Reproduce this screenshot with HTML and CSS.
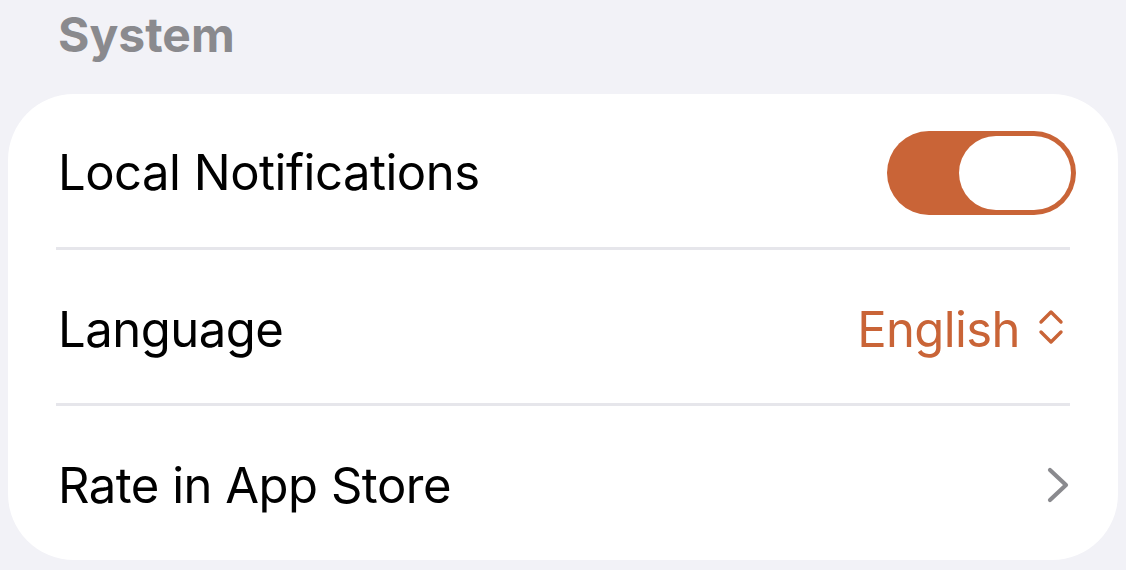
FILE: index.html
```html
<!DOCTYPE html>
<html>
<head>
<meta charset="utf-8">
<link rel="stylesheet" href="styles.css">
</head>
<body>
<div class="page">
  <div class="section-title">System</div>
  <div class="card">
    <div class="row row-toggle">
      <span class="label">Local Notifications</span>
      <span class="toggle"><span class="knob"></span></span>
    </div>
    <div class="sep"></div>
    <div class="row row-picker">
      <span class="label">Language</span>
      <span class="value">English
        <svg class="updown" viewBox="0 0 26 38" width="26" height="38"><path d="M3 14 L13 4 L23 14 M3 24 L13 34 L23 24" fill="none" stroke="currentColor" stroke-width="3.4" stroke-linecap="round" stroke-linejoin="round"/></svg>
      </span>
    </div>
    <div class="sep"></div>
    <div class="row">
      <span class="label">Rate in App Store</span>
      <svg class="chev" viewBox="0 0 24 38" width="24" height="38"><path d="M4 4 L20 19 L4 34" fill="none" stroke="currentColor" stroke-width="4.2" stroke-linecap="round" stroke-linejoin="round"/></svg>
    </div>
  </div>
</div>
</body>
</html>
```
FILE: styles.css
```css
html, body {
  margin: 0;
  padding: 0;
  background: #f2f2f7;
  font-family: Inter, "Noto Sans", sans-serif;
}
.page {
  width: 1126px;
  height: 570px;
  overflow: hidden;
  padding: 0 8px;
  box-sizing: border-box;
}
.section-title {
  height: 94px;
  box-sizing: border-box;
  padding: 9px 0 0 50px;
  font-size: 48px;
  font-weight: 700;
  color: #8a8a8e;
  line-height: 52px;
}
.card {
  background: #ffffff;
  border-radius: 66px;
  width: 1110px;
  height: 466px;
  display: flex;
  flex-direction: column;
}
.row {
  height: 154px;
  display: flex;
  align-items: center;
  justify-content: space-between;
  padding: 0 48px 0 50px;
}
.row-toggle { height: 153px; padding-right: 42px; }
.row-picker { padding-right: 54px; }
.label {
  font-size: 49px;
  color: #000;
  letter-spacing: -0.5px;
  padding-top: 5px;
}
.sep {
  height: 3px;
  background: #e6e6eb;
  margin: 0 48px 0 48px;
}
.toggle {
  width: 189px;
  height: 84px;
  border-radius: 42px;
  background: #c96437;
  box-sizing: border-box;
  padding: 5px;
  display: flex;
  justify-content: flex-end;
  margin-top: 6px;
}
.knob {
  width: 112px;
  height: 74px;
  border-radius: 37px;
  background: #fff;
}
.value {
  display: flex;
  align-items: center;
  gap: 18px;
  font-size: 49px;
  color: #c96437;
  letter-spacing: -0.6px;
  padding-top: 5px;
}
.updown { color: #c96437; margin-top: -4px; }
.chev { color: #8a8a8e; margin-top: 4px; }
```
